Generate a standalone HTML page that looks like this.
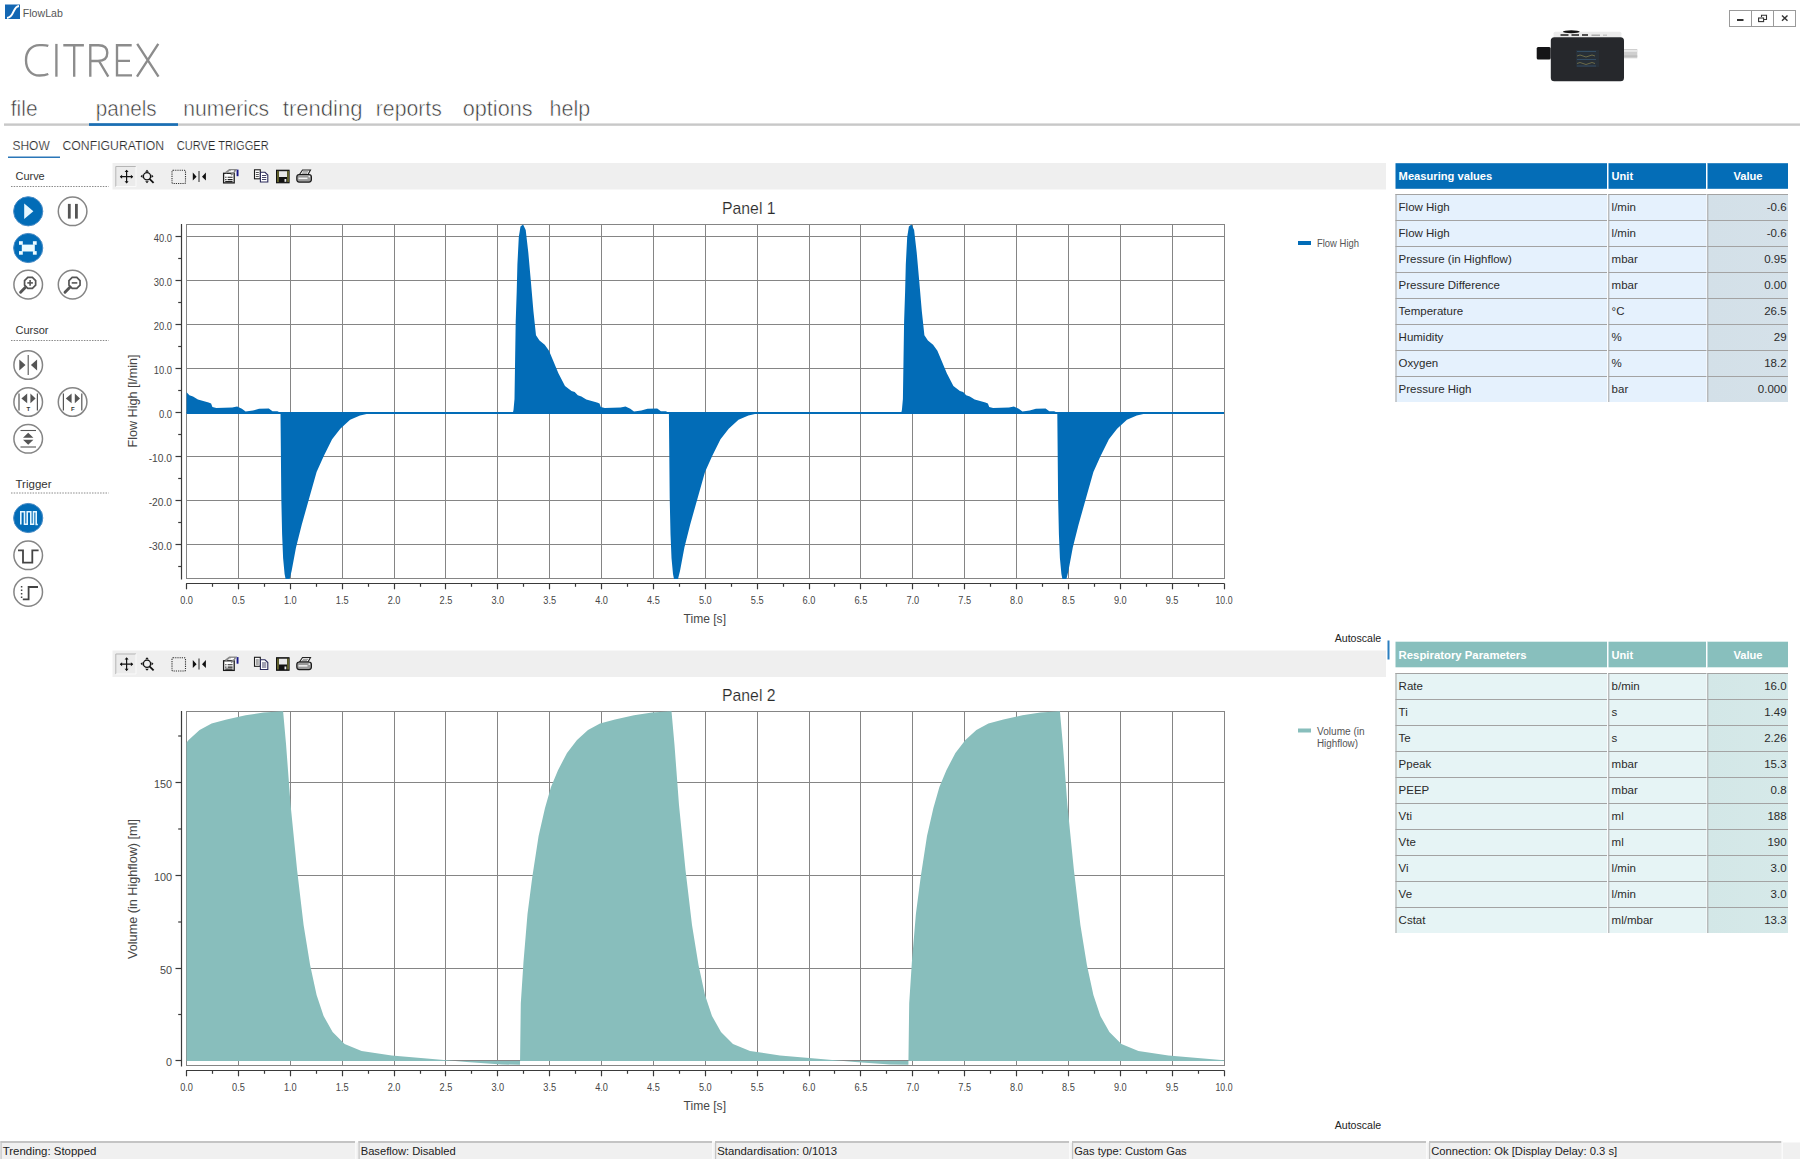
<!DOCTYPE html>
<html><head><meta charset="utf-8"><title>FlowLab</title>
<style>
html,body{margin:0;padding:0;background:#fff;width:1800px;height:1159px;overflow:hidden}
svg{position:absolute;left:0;top:0;display:block}
text{font-family:"Liberation Sans", sans-serif}
</style></head><body>
<svg width="1800" height="1159" viewBox="0 0 1800 1159">
<rect x="5" y="4.5" width="15" height="14.5" fill="#1467b3"/>
<path d="M19 6 C12.5 6.5 14.5 17.5 7 18" stroke="#fff" stroke-width="2" fill="none"/>
<text x="22.8" y="17.3" font-size="11" fill="#555" textLength="40" lengthAdjust="spacingAndGlyphs">FlowLab</text>
<rect x="1729.5" y="10.5" width="66" height="16" fill="#fff" stroke="#9a9a9a" stroke-width="1"/>
<line x1="1751.5" y1="10.5" x2="1751.5" y2="26.5" stroke="#9a9a9a" stroke-width="1"/>
<line x1="1773.5" y1="10.5" x2="1773.5" y2="26.5" stroke="#9a9a9a" stroke-width="1"/>
<rect x="1737" y="19" width="6.5" height="2" fill="#333"/>
<path d="M1761.5 17 V15.2 H1766.5 V19.5 H1764" stroke="#333" stroke-width="1.1" fill="none"/>
<rect x="1758.6" y="18" width="5" height="3.6" stroke="#333" stroke-width="1.1" fill="none"/>
<path d="M1782 15.5 L1787.5 20.8 M1787.5 15.5 L1782 20.8" stroke="#333" stroke-width="1.4"/>
<g stroke="#8c8c8c" stroke-width="2.35" fill="none">
<path d="M48.3 45.9 C45.5 44.7 42.5 45.1 39.5 45.1 C31 45.1 26 51.5 26 60.2 C26 69 31 75.5 39.5 75.5 C42.5 75.5 45.5 75.3 48.3 74"/>
<path d="M56.4 43.9 V76.7"/>
<path d="M63.3 45.2 H83.9 M74.2 45.2 V76.7"/>
<path d="M90.3 76.7 V45.2 H98.5 C104.5 45.2 107.3 48.2 107.3 52.8 C107.3 58 103.8 61 98 61 H90.3 M99 61 L108.3 76.7"/>
<path d="M131.7 45.2 H117 V75.3 H132 M117 60.8 H130"/>
<path d="M137.2 43.9 L158.5 76.7 M158.3 43.9 L137 76.7"/>
</g>
<g>
<rect x="1553.6" y="31.8" width="67.8" height="6" rx="1.5" fill="#ececec"/>
<ellipse cx="1571.3" cy="31.8" rx="8.4" ry="1.5" fill="#111"/>
<rect x="1560.5" y="34.2" width="8" height="1.6" fill="#2a2a2a"/><rect x="1571.5" y="34.2" width="7.5" height="1.6" fill="#2a2a2a"/><rect x="1582" y="34.2" width="6" height="1.6" fill="#2a2a2a"/><rect x="1591.5" y="34.6" width="8.5" height="1.2" fill="#9a9a9a"/><rect x="1603" y="34.6" width="4" height="1.2" fill="#bbb"/>
<rect x="1536.7" y="47" width="14" height="12.5" rx="1.5" fill="#151517"/>
<rect x="1623" y="49" width="14.3" height="9.3" fill="#cfcfcf"/>
<rect x="1623" y="50" width="14.3" height="1.8" fill="#eaeaea"/><rect x="1623" y="55.5" width="14.3" height="1.2" fill="#b8b8b8"/>
<rect x="1550.8" y="37.2" width="73.2" height="44" rx="3.5" fill="#26282c"/>
<rect x="1576" y="50" width="23" height="17" fill="#283038" opacity="0.9"/>
<path d="M1577 56 q3 -2 6 0 t6 0 t6 0 M1577 63.5 q3 -2 6 0 t6 0 t6 0" stroke="#8a8450" stroke-width="0.7" fill="none"/>
<path d="M1577 51.5 h19 M1577 59.5 h19 M1577 66 h19" stroke="#3a5a78" stroke-width="0.7" fill="none"/>
</g>
<text x="10.8" y="115.8" font-size="22" fill="#383838" textLength="26.7" lengthAdjust="spacingAndGlyphs" stroke="#fff" stroke-width="0.55">file</text>
<text x="95.8" y="115.8" font-size="22" fill="#383838" textLength="60.9" lengthAdjust="spacingAndGlyphs" stroke="#fff" stroke-width="0.55">panels</text>
<text x="183.3" y="115.8" font-size="22" fill="#383838" textLength="85.9" lengthAdjust="spacingAndGlyphs" stroke="#fff" stroke-width="0.55">numerics</text>
<text x="282.8" y="115.8" font-size="22" fill="#383838" textLength="79.8" lengthAdjust="spacingAndGlyphs" stroke="#fff" stroke-width="0.55">trending</text>
<text x="375.8" y="115.8" font-size="22" fill="#383838" textLength="66.1" lengthAdjust="spacingAndGlyphs" stroke="#fff" stroke-width="0.55">reports</text>
<text x="462.7" y="115.8" font-size="22" fill="#383838" textLength="69.9" lengthAdjust="spacingAndGlyphs" stroke="#fff" stroke-width="0.55">options</text>
<text x="549.6" y="115.8" font-size="22" fill="#383838" textLength="40.6" lengthAdjust="spacingAndGlyphs" stroke="#fff" stroke-width="0.55">help</text>
<rect x="4" y="123.4" width="1796" height="2.4" fill="#c8c8c8"/>
<rect x="89" y="123.2" width="89" height="2.7" fill="#1a6fb5"/>
<text x="12.5" y="150" font-size="12.5" fill="#2a2a2a" textLength="37.2" lengthAdjust="spacingAndGlyphs" stroke="#fff" stroke-width="0.18">SHOW</text>
<text x="62.5" y="150" font-size="12.5" fill="#2a2a2a" textLength="101.7" lengthAdjust="spacingAndGlyphs" stroke="#fff" stroke-width="0.18">CONFIGURATION</text>
<text x="176.7" y="150" font-size="12.5" fill="#2a2a2a" textLength="92" lengthAdjust="spacingAndGlyphs" stroke="#fff" stroke-width="0.18">CURVE TRIGGER</text>
<rect x="8" y="156.5" width="52" height="1.5" fill="#2a76b8"/>
<text x="15.5" y="180" font-size="11" fill="#333" textLength="29.2" lengthAdjust="spacingAndGlyphs">Curve</text>
<line x1="11" y1="186.5" x2="108.7" y2="186.5" stroke="#8a8a8a" stroke-width="1" stroke-dasharray="1.5 1.2"/>
<text x="15.5" y="334" font-size="11" fill="#333" textLength="33" lengthAdjust="spacingAndGlyphs">Cursor</text>
<line x1="11" y1="340.5" x2="108.7" y2="340.5" stroke="#8a8a8a" stroke-width="1" stroke-dasharray="1.5 1.2"/>
<text x="15.5" y="487.6" font-size="11" fill="#333" textLength="36" lengthAdjust="spacingAndGlyphs">Trigger</text>
<line x1="11" y1="493" x2="108.7" y2="493" stroke="#8a8a8a" stroke-width="1" stroke-dasharray="1.5 1.2"/>
<circle cx="28.2" cy="211.3" r="14.6" fill="#026cb7" stroke="#4a8cc6" stroke-width="1"/>
<path d="M24.2 203.4 L33.4 211.3 L24.2 219.1 Z" fill="#e6f7ff"/>
<circle cx="72.6" cy="211.3" r="14.3" fill="#fff" stroke="#858585" stroke-width="1.5"/>
<rect x="67.9" y="203.9" width="2.8" height="14.7" fill="#555"/><rect x="75" y="203.9" width="2.8" height="14.7" fill="#555"/>
<circle cx="28.2" cy="248" r="14.6" fill="#026cb7" stroke="#4a8cc6" stroke-width="1"/>
<g fill="#ecfbff"><rect x="21.8" y="244.6" width="13" height="6.9"/><rect x="19" y="241.2" width="3.8" height="3.6"/><rect x="32.9" y="241.2" width="3.8" height="3.6"/><rect x="19" y="251.1" width="3.8" height="3.6"/><rect x="32.9" y="251.1" width="3.8" height="3.6"/></g>
<circle cx="28.2" cy="284.6" r="14.3" fill="#fff" stroke="#858585" stroke-width="1.5"/>
<polygon points="35.64,285.20 32.40,288.44 27.80,288.44 24.56,285.20 24.56,280.60 27.80,277.36 32.40,277.36 35.64,280.60" fill="#fff" stroke="#555" stroke-width="1.7"/>
<line x1="25.5" y1="287.3" x2="20.6" y2="292.20000000000005" stroke="#555" stroke-width="2.9" stroke-linecap="round"/>
<line x1="27.299999999999997" y1="282.90000000000003" x2="32.9" y2="282.90000000000003" stroke="#555" stroke-width="1.6"/>
<line x1="30.099999999999998" y1="280.1" x2="30.099999999999998" y2="285.70000000000005" stroke="#555" stroke-width="1.6"/>
<circle cx="72.6" cy="284.6" r="14.3" fill="#fff" stroke="#858585" stroke-width="1.5"/>
<polygon points="80.04,285.20 76.80,288.44 72.20,288.44 68.96,285.20 68.96,280.60 72.20,277.36 76.80,277.36 80.04,280.60" fill="#fff" stroke="#555" stroke-width="1.7"/>
<line x1="69.9" y1="287.3" x2="65.0" y2="292.20000000000005" stroke="#555" stroke-width="2.9" stroke-linecap="round"/>
<line x1="71.7" y1="282.90000000000003" x2="77.3" y2="282.90000000000003" stroke="#555" stroke-width="1.6"/>
<circle cx="28.2" cy="365" r="14.3" fill="#fff" stroke="#858585" stroke-width="1.5"/>
<line x1="28.2" y1="355" x2="28.2" y2="375" stroke="#555" stroke-width="1.1"/>
<path d="M19.3 359.5 L25.5 365 L19.3 370.5 Z M37.1 359.5 L30.9 365 L37.1 370.5 Z" fill="#555"/>
<circle cx="28.2" cy="402" r="14.3" fill="#fff" stroke="#858585" stroke-width="1.5"/>
<line x1="19.0" y1="393.5" x2="19.0" y2="410.5" stroke="#555" stroke-width="1.2"/>
<line x1="37.4" y1="393.5" x2="37.4" y2="410.5" stroke="#555" stroke-width="1.2"/>
<path d="M27.2 393.5 L21.4 398.4 L27.2 403.3 Z M30.4 393.5 L35.6 398.4 L30.4 403.3 Z" fill="#555"/>
<text x="28.4" y="410.6" font-size="6" fill="#333" text-anchor="middle" font-weight="bold">T</text>
<circle cx="72.6" cy="402" r="14.3" fill="#fff" stroke="#858585" stroke-width="1.5"/>
<line x1="63.39999999999999" y1="393.5" x2="63.39999999999999" y2="410.5" stroke="#555" stroke-width="1.2"/>
<line x1="81.8" y1="393.5" x2="81.8" y2="410.5" stroke="#555" stroke-width="1.2"/>
<path d="M71.6 393.5 L65.8 398.4 L71.6 403.3 Z M74.8 393.5 L80.0 398.4 L74.8 403.3 Z" fill="#555"/>
<text x="72.8" y="410.6" font-size="6" fill="#333" text-anchor="middle" font-weight="bold">F</text>
<circle cx="28.2" cy="438.8" r="14.3" fill="#fff" stroke="#858585" stroke-width="1.5"/>
<line x1="20.5" y1="430.5" x2="36" y2="430.5" stroke="#555" stroke-width="1.1"/><line x1="20.5" y1="447" x2="36" y2="447" stroke="#555" stroke-width="1.1"/>
<path d="M23 437.8 L28.2 432.8 L33.4 437.8 Z M23 439.8 L28.2 444.8 L33.4 439.8 Z" fill="#555"/>
<circle cx="28.2" cy="518" r="14.6" fill="#026cb7" stroke="#4a8cc6" stroke-width="1"/>
<path d="M20.8 524.5 V511.8 H24.5 V524.3 H27.2 V511.8 H30.8 V524.3 H33.5 V511.8 H36.2 V524.5 H37.8" stroke="#e6f7ff" stroke-width="1.6" fill="none"/>
<circle cx="28.2" cy="555.3" r="14.3" fill="#fff" stroke="#858585" stroke-width="1.5"/>
<path d="M18 550.4 H23 V562.6 H32.3 V550.4 H38.6" stroke="#444" stroke-width="1.8" fill="none"/>
<circle cx="28.2" cy="591.9" r="14.3" fill="#fff" stroke="#858585" stroke-width="1.5"/>
<path d="M22.8 599.3 H28.6 V587 H38" stroke="#444" stroke-width="1.8" fill="none"/>
<path d="M21.6 586 V598" stroke="#444" stroke-width="1.5" stroke-dasharray="1.5 2" fill="none"/>
<rect x="112.5" y="163" width="1273.5" height="26.5" fill="#efefef"/>
<rect x="115.5" y="166.3" width="20.5" height="20.5" fill="#ebebeb"/>
<path d="M115.8 186.5 V166.5 H136" stroke="#b5b5b5" stroke-width="1" fill="none"/>
<path d="M116 186.5 H136 V166.5" stroke="#fafafa" stroke-width="1" fill="none"/>
<path d="M120.5 176.7 H132.5 M126.6 170.39999999999998 V183.0" stroke="#111" stroke-width="1.2"/>
<path d="M119.8 176.7 l2.3 -2 v4 z M133.2 176.7 l-2.3 -2 v4 z M126.6 169.79999999999998 l-2 2.3 h4 z M126.6 183.6 l-2 -2.3 h4 z" fill="#111"/>
<circle cx="147" cy="176.2" r="3.6" fill="none" stroke="#111" stroke-width="1.3"/>
<line x1="149.5" y1="178.89999999999998" x2="153.6" y2="182.89999999999998" stroke="#111" stroke-width="1.8"/>
<path d="M147 169.7 l-1.8 2 h3.6 z M147 183.29999999999998 l-1.8 -2 h3.6 z M140.5 176.2 l2 -1.8 v3.6 z M153.5 176.2 l-2 -1.8 v3.6 z" fill="#111"/>
<rect x="172" y="170.3" width="13.5" height="13.2" rx="1" fill="none" stroke="#333" stroke-width="1.1" stroke-dasharray="1.2 1"/>
<line x1="199" y1="171" x2="199" y2="182" stroke="#555" stroke-width="1.3"/>
<path d="M192.8 172.5 L196.6 176.7 L192.8 180.5 Z M205.9 172.5 L202 176.7 L205.9 180.5 Z" fill="#111"/>
<rect x="223.6" y="173.3" width="10.6" height="9.6" fill="#fff" stroke="#1a1a1a" stroke-width="1.3"/>
<path d="M225.2 177.2 h1.3 M227.6 177.2 h5 M225.2 179.6 h1.3 M227.6 179.6 h5 M225.2 181.6 h7.4" stroke="#222" stroke-width="1.1"/>
<path d="M225.5 173 L229.5 169.8 H235.5 L233.8 172.5 L231 175" stroke="#8a8a8a" stroke-width="1.8" fill="none"/>
<path d="M231 171 L234 171" stroke="#fff" stroke-width="1.2"/>
<rect x="236.6" y="169.6" width="1.9" height="6.6" fill="#1a1a8a"/>
<rect x="254.5" y="169.8" width="5.8" height="9" fill="#fff" stroke="#1a1a1a" stroke-width="1.1"/>
<path d="M255.8 172.5 h3 M255.8 174.5 h3 M255.8 176.5 h3" stroke="#444" stroke-width="0.9"/>
<path d="M260.4 172.3 H265 L267.8 175 V182 H260.4 Z" fill="#fff" stroke="#2a2a5a" stroke-width="1.1"/>
<path d="M262 175.5 h4.3 M262 177.5 h4.3 M262 179.5 h4.3" stroke="#444466" stroke-width="1"/>
<rect x="276.5" y="170.2" width="12.6" height="12.6" fill="#111" stroke="#111" stroke-width="1"/>
<rect x="277.2" y="171" width="1.5" height="11" fill="#777733"/><rect x="287.3" y="171" width="1.5" height="11" fill="#777733"/>
<rect x="279" y="171.2" width="8" height="5.8" fill="#e8e8e8"/>
<rect x="284.5" y="179" width="1.8" height="2.8" fill="#eee"/>
<path d="M299.5 174.5 L302.5 170 H310.5 L308 174.5 Z" fill="#f0f0f0" stroke="#222" stroke-width="1.1"/>
<path d="M303 171.8 h5 M302 173.2 h5" stroke="#666" stroke-width="0.7"/>
<rect x="296.8" y="174.5" width="14.6" height="7.6" rx="2.5" fill="#9a9a9a" stroke="#1a1a1a" stroke-width="1.2"/>
<rect x="298.5" y="177.6" width="9" height="1.5" fill="#f4f4f4"/>
<circle cx="309.3" cy="176.6" r="0.9" fill="#eee"/>
<rect x="112.5" y="650.5" width="1273.5" height="26.5" fill="#efefef"/>
<rect x="115.5" y="653.8" width="20.5" height="20.5" fill="#ebebeb"/>
<path d="M115.8 674.0 V654.0 H136" stroke="#b5b5b5" stroke-width="1" fill="none"/>
<path d="M116 674.0 H136 V654.0" stroke="#fafafa" stroke-width="1" fill="none"/>
<path d="M120.5 664.2 H132.5 M126.6 657.9000000000001 V670.5" stroke="#111" stroke-width="1.2"/>
<path d="M119.8 664.2 l2.3 -2 v4 z M133.2 664.2 l-2.3 -2 v4 z M126.6 657.3000000000001 l-2 2.3 h4 z M126.6 671.1 l-2 -2.3 h4 z" fill="#111"/>
<circle cx="147" cy="663.7" r="3.6" fill="none" stroke="#111" stroke-width="1.3"/>
<line x1="149.5" y1="666.4000000000001" x2="153.6" y2="670.4000000000001" stroke="#111" stroke-width="1.8"/>
<path d="M147 657.2 l-1.8 2 h3.6 z M147 670.8000000000001 l-1.8 -2 h3.6 z M140.5 663.7 l2 -1.8 v3.6 z M153.5 663.7 l-2 -1.8 v3.6 z" fill="#111"/>
<rect x="172" y="657.8" width="13.5" height="13.2" rx="1" fill="none" stroke="#333" stroke-width="1.1" stroke-dasharray="1.2 1"/>
<line x1="199" y1="658.5" x2="199" y2="669.5" stroke="#555" stroke-width="1.3"/>
<path d="M192.8 660.0 L196.6 664.2 L192.8 668.0 Z M205.9 660.0 L202 664.2 L205.9 668.0 Z" fill="#111"/>
<rect x="223.6" y="660.8" width="10.6" height="9.6" fill="#fff" stroke="#1a1a1a" stroke-width="1.3"/>
<path d="M225.2 664.7 h1.3 M227.6 664.7 h5 M225.2 667.1 h1.3 M227.6 667.1 h5 M225.2 669.1 h7.4" stroke="#222" stroke-width="1.1"/>
<path d="M225.5 660.5 L229.5 657.3 H235.5 L233.8 660.0 L231 662.5" stroke="#8a8a8a" stroke-width="1.8" fill="none"/>
<path d="M231 658.5 L234 658.5" stroke="#fff" stroke-width="1.2"/>
<rect x="236.6" y="657.1" width="1.9" height="6.6" fill="#1a1a8a"/>
<rect x="254.5" y="657.3" width="5.8" height="9" fill="#fff" stroke="#1a1a1a" stroke-width="1.1"/>
<path d="M255.8 660.0 h3 M255.8 662.0 h3 M255.8 664.0 h3" stroke="#444" stroke-width="0.9"/>
<path d="M260.4 659.8 H265 L267.8 662.5 V669.5 H260.4 Z" fill="#fff" stroke="#2a2a5a" stroke-width="1.1"/>
<path d="M262 663.0 h4.3 M262 665.0 h4.3 M262 667.0 h4.3" stroke="#444466" stroke-width="1"/>
<rect x="276.5" y="657.7" width="12.6" height="12.6" fill="#111" stroke="#111" stroke-width="1"/>
<rect x="277.2" y="658.5" width="1.5" height="11" fill="#777733"/><rect x="287.3" y="658.5" width="1.5" height="11" fill="#777733"/>
<rect x="279" y="658.7" width="8" height="5.8" fill="#e8e8e8"/>
<rect x="284.5" y="666.5" width="1.8" height="2.8" fill="#eee"/>
<path d="M299.5 662.0 L302.5 657.5 H310.5 L308 662.0 Z" fill="#f0f0f0" stroke="#222" stroke-width="1.1"/>
<path d="M303 659.3 h5 M302 660.7 h5" stroke="#666" stroke-width="0.7"/>
<rect x="296.8" y="662.0" width="14.6" height="7.6" rx="2.5" fill="#9a9a9a" stroke="#1a1a1a" stroke-width="1.2"/>
<rect x="298.5" y="665.1" width="9" height="1.5" fill="#f4f4f4"/>
<circle cx="309.3" cy="664.1" r="0.9" fill="#eee"/>
<text x="748.8" y="213.7" font-size="16.5" fill="#2a2a2a" text-anchor="middle" textLength="53.7" lengthAdjust="spacingAndGlyphs" stroke="#fff" stroke-width="0.18">Panel 1</text>
<g stroke="#858585" stroke-width="1">
<line x1="238.5" y1="224.5" x2="238.5" y2="578.5"/>
<line x1="290.5" y1="224.5" x2="290.5" y2="578.5"/>
<line x1="342.5" y1="224.5" x2="342.5" y2="578.5"/>
<line x1="394.5" y1="224.5" x2="394.5" y2="578.5"/>
<line x1="445.5" y1="224.5" x2="445.5" y2="578.5"/>
<line x1="497.5" y1="224.5" x2="497.5" y2="578.5"/>
<line x1="549.5" y1="224.5" x2="549.5" y2="578.5"/>
<line x1="601.5" y1="224.5" x2="601.5" y2="578.5"/>
<line x1="653.5" y1="224.5" x2="653.5" y2="578.5"/>
<line x1="705.5" y1="224.5" x2="705.5" y2="578.5"/>
<line x1="757.5" y1="224.5" x2="757.5" y2="578.5"/>
<line x1="809.5" y1="224.5" x2="809.5" y2="578.5"/>
<line x1="860.5" y1="224.5" x2="860.5" y2="578.5"/>
<line x1="912.5" y1="224.5" x2="912.5" y2="578.5"/>
<line x1="964.5" y1="224.5" x2="964.5" y2="578.5"/>
<line x1="1016.5" y1="224.5" x2="1016.5" y2="578.5"/>
<line x1="1068.5" y1="224.5" x2="1068.5" y2="578.5"/>
<line x1="1120.5" y1="224.5" x2="1120.5" y2="578.5"/>
<line x1="1172.5" y1="224.5" x2="1172.5" y2="578.5"/>
<line x1="186.5" y1="236.5" x2="1224.5" y2="236.5"/>
<line x1="186.5" y1="280.5" x2="1224.5" y2="280.5"/>
<line x1="186.5" y1="324.5" x2="1224.5" y2="324.5"/>
<line x1="186.5" y1="368.5" x2="1224.5" y2="368.5"/>
<line x1="186.5" y1="412.5" x2="1224.5" y2="412.5"/>
<line x1="186.5" y1="456.5" x2="1224.5" y2="456.5"/>
<line x1="186.5" y1="500.5" x2="1224.5" y2="500.5"/>
<line x1="186.5" y1="544.5" x2="1224.5" y2="544.5"/>
<rect x="186.5" y="224.5" width="1038.0" height="354.0" fill="none"/>
</g>
<path d="M186.6 413 L186.6 392.3 L189.4 395.3 L193.0 396.5 L197.9 399.6 L208.6 402.5 L211.1 403.5 L212.4 406.9 L216.3 408.1 L232.2 407.5 L237.1 406.6 L241.9 408.7 L245.6 411.5 L252.9 410.6 L259.1 408.7 L268.8 408.4 L272.5 411.3 L277.4 411.2 L280.0 412.5 L280.5 413.0 L281.3 498.0 L282.1 534.0 L283.1 558.0 L284.6 574.0 L285.6 579.0 L289.6 579.0 L291.6 571.0 L296.0 547.5 L301.8 524.6 L309.1 498.4 L316.6 472.0 L323.9 455.7 L332.1 439.3 L340.3 428.7 L350.1 419.7 L360.0 415.6 L366.6 414.0 L371.6 413.0 L512.4 413.0 L512.8 413.0 L513.5 410.0 L514.5 399.0 L515.7 321.4 L516.7 292.0 L517.4 264.6 L518.8 237.0 L520.5 226.6 L523.1 224.6 L525.7 230.0 L528.3 252.5 L530.9 281.8 L533.4 311.0 L536.0 335.2 L539.5 340.4 L544.7 344.7 L549.0 350.8 L553.3 361.0 L558.4 373.2 L565.0 386.0 L571.5 391.0 L574.7 392.0 L577.8 395.3 L581.4 396.5 L586.3 399.6 L597.0 402.5 L599.5 403.5 L600.8 406.9 L604.7 408.1 L620.6 407.5 L625.5 406.6 L630.3 408.7 L634.0 411.5 L641.3 410.6 L647.5 408.7 L657.2 408.4 L660.9 411.3 L665.8 411.2 L668.4 412.5 L668.9 413.0 L669.7 498.0 L670.5 534.0 L671.5 558.0 L673.0 574.0 L674.0 579.0 L678.0 579.0 L680.0 571.0 L684.4 547.5 L690.2 524.6 L697.5 498.4 L705.0 472.0 L712.3 455.7 L720.5 439.3 L728.7 428.7 L738.5 419.7 L748.4 415.6 L755.0 414.0 L760.0 413.0 L900.8 413.0 L901.2 413.0 L901.9 410.0 L902.9 399.0 L904.1 321.4 L905.1 292.0 L905.8 264.6 L907.2 237.0 L908.9 226.6 L911.5 224.6 L914.1 230.0 L916.7 252.5 L919.3 281.8 L921.8 311.0 L924.4 335.2 L927.9 340.4 L933.1 344.7 L937.4 350.8 L941.7 361.0 L946.8 373.2 L953.4 386.0 L959.9 391.0 L963.1 392.0 L966.2 395.3 L969.8 396.5 L974.7 399.6 L985.4 402.5 L987.9 403.5 L989.2 406.9 L993.1 408.1 L1009.0 407.5 L1013.9 406.6 L1018.7 408.7 L1022.4 411.5 L1029.7 410.6 L1035.9 408.7 L1045.6 408.4 L1049.3 411.3 L1054.2 411.2 L1056.8 412.5 L1057.3 413.0 L1058.1 498.0 L1058.9 534.0 L1059.9 558.0 L1061.4 574.0 L1062.4 579.0 L1066.4 579.0 L1068.4 571.0 L1072.8 547.5 L1078.6 524.6 L1085.9 498.4 L1093.4 472.0 L1100.7 455.7 L1108.9 439.3 L1117.1 428.7 L1126.9 419.7 L1136.8 415.6 L1143.4 414.0 L1148.4 413.0 L1224.0 413.0 L1224.0 413 Z" fill="#026cb7"/>
<rect x="186.6" y="412" width="1037.4" height="2" fill="#026cb7"/>
<g stroke="#3a3a3a" stroke-width="1.2">
<line x1="181.5" y1="224.0" x2="181.5" y2="579.5"/>
<line x1="175.5" y1="236.5" x2="181.5" y2="236.5"/>
<line x1="175.5" y1="280.5" x2="181.5" y2="280.5"/>
<line x1="175.5" y1="324.5" x2="181.5" y2="324.5"/>
<line x1="175.5" y1="368.5" x2="181.5" y2="368.5"/>
<line x1="175.5" y1="412.5" x2="181.5" y2="412.5"/>
<line x1="175.5" y1="456.5" x2="181.5" y2="456.5"/>
<line x1="175.5" y1="500.5" x2="181.5" y2="500.5"/>
<line x1="175.5" y1="544.5" x2="181.5" y2="544.5"/>
<line x1="178.2" y1="258.5" x2="181.5" y2="258.5"/>
<line x1="178.2" y1="302.5" x2="181.5" y2="302.5"/>
<line x1="178.2" y1="346.5" x2="181.5" y2="346.5"/>
<line x1="178.2" y1="390.5" x2="181.5" y2="390.5"/>
<line x1="178.2" y1="434.5" x2="181.5" y2="434.5"/>
<line x1="178.2" y1="478.5" x2="181.5" y2="478.5"/>
<line x1="178.2" y1="522.5" x2="181.5" y2="522.5"/>
<line x1="178.2" y1="566.5" x2="181.5" y2="566.5"/>
<line x1="186.1" y1="583.5" x2="1224.5" y2="583.5"/>
<line x1="186.5" y1="583.5" x2="186.5" y2="589.3"/>
<line x1="238.5" y1="583.5" x2="238.5" y2="589.3"/>
<line x1="290.5" y1="583.5" x2="290.5" y2="589.3"/>
<line x1="342.5" y1="583.5" x2="342.5" y2="589.3"/>
<line x1="394.5" y1="583.5" x2="394.5" y2="589.3"/>
<line x1="445.5" y1="583.5" x2="445.5" y2="589.3"/>
<line x1="497.5" y1="583.5" x2="497.5" y2="589.3"/>
<line x1="549.5" y1="583.5" x2="549.5" y2="589.3"/>
<line x1="601.5" y1="583.5" x2="601.5" y2="589.3"/>
<line x1="653.5" y1="583.5" x2="653.5" y2="589.3"/>
<line x1="705.5" y1="583.5" x2="705.5" y2="589.3"/>
<line x1="757.5" y1="583.5" x2="757.5" y2="589.3"/>
<line x1="809.5" y1="583.5" x2="809.5" y2="589.3"/>
<line x1="860.5" y1="583.5" x2="860.5" y2="589.3"/>
<line x1="912.5" y1="583.5" x2="912.5" y2="589.3"/>
<line x1="964.5" y1="583.5" x2="964.5" y2="589.3"/>
<line x1="1016.5" y1="583.5" x2="1016.5" y2="589.3"/>
<line x1="1068.5" y1="583.5" x2="1068.5" y2="589.3"/>
<line x1="1120.5" y1="583.5" x2="1120.5" y2="589.3"/>
<line x1="1172.5" y1="583.5" x2="1172.5" y2="589.3"/>
<line x1="1224.5" y1="583.5" x2="1224.5" y2="589.3"/>
<line x1="212.5" y1="583.5" x2="212.5" y2="586.8"/>
<line x1="264.5" y1="583.5" x2="264.5" y2="586.8"/>
<line x1="316.5" y1="583.5" x2="316.5" y2="586.8"/>
<line x1="368.5" y1="583.5" x2="368.5" y2="586.8"/>
<line x1="420.5" y1="583.5" x2="420.5" y2="586.8"/>
<line x1="471.5" y1="583.5" x2="471.5" y2="586.8"/>
<line x1="523.5" y1="583.5" x2="523.5" y2="586.8"/>
<line x1="575.5" y1="583.5" x2="575.5" y2="586.8"/>
<line x1="627.5" y1="583.5" x2="627.5" y2="586.8"/>
<line x1="679.5" y1="583.5" x2="679.5" y2="586.8"/>
<line x1="731.5" y1="583.5" x2="731.5" y2="586.8"/>
<line x1="783.5" y1="583.5" x2="783.5" y2="586.8"/>
<line x1="834.5" y1="583.5" x2="834.5" y2="586.8"/>
<line x1="886.5" y1="583.5" x2="886.5" y2="586.8"/>
<line x1="938.5" y1="583.5" x2="938.5" y2="586.8"/>
<line x1="990.5" y1="583.5" x2="990.5" y2="586.8"/>
<line x1="1042.5" y1="583.5" x2="1042.5" y2="586.8"/>
<line x1="1094.5" y1="583.5" x2="1094.5" y2="586.8"/>
<line x1="1146.5" y1="583.5" x2="1146.5" y2="586.8"/>
<line x1="1198.5" y1="583.5" x2="1198.5" y2="586.8"/>
</g>
<text x="172" y="241.5" font-size="10" fill="#474747" text-anchor="end" textLength="18.2" lengthAdjust="spacingAndGlyphs">40.0</text>
<text x="172" y="285.5" font-size="10" fill="#474747" text-anchor="end" textLength="18.2" lengthAdjust="spacingAndGlyphs">30.0</text>
<text x="172" y="329.5" font-size="10" fill="#474747" text-anchor="end" textLength="18.2" lengthAdjust="spacingAndGlyphs">20.0</text>
<text x="172" y="373.5" font-size="10" fill="#474747" text-anchor="end" textLength="18.2" lengthAdjust="spacingAndGlyphs">10.0</text>
<text x="172" y="417.5" font-size="10" fill="#474747" text-anchor="end" textLength="13.099999999999998" lengthAdjust="spacingAndGlyphs">0.0</text>
<text x="172" y="461.5" font-size="10" fill="#474747" text-anchor="end" textLength="23.3" lengthAdjust="spacingAndGlyphs">-10.0</text>
<text x="172" y="505.5" font-size="10" fill="#474747" text-anchor="end" textLength="23.3" lengthAdjust="spacingAndGlyphs">-20.0</text>
<text x="172" y="549.5" font-size="10" fill="#474747" text-anchor="end" textLength="23.3" lengthAdjust="spacingAndGlyphs">-30.0</text>
<text x="186.6" y="603.7" font-size="10" fill="#474747" text-anchor="middle" textLength="12.8" lengthAdjust="spacingAndGlyphs">0.0</text>
<text x="238.5" y="603.7" font-size="10" fill="#474747" text-anchor="middle" textLength="12.8" lengthAdjust="spacingAndGlyphs">0.5</text>
<text x="290.3" y="603.7" font-size="10" fill="#474747" text-anchor="middle" textLength="12.8" lengthAdjust="spacingAndGlyphs">1.0</text>
<text x="342.2" y="603.7" font-size="10" fill="#474747" text-anchor="middle" textLength="12.8" lengthAdjust="spacingAndGlyphs">1.5</text>
<text x="394.1" y="603.7" font-size="10" fill="#474747" text-anchor="middle" textLength="12.8" lengthAdjust="spacingAndGlyphs">2.0</text>
<text x="446.0" y="603.7" font-size="10" fill="#474747" text-anchor="middle" textLength="12.8" lengthAdjust="spacingAndGlyphs">2.5</text>
<text x="497.8" y="603.7" font-size="10" fill="#474747" text-anchor="middle" textLength="12.8" lengthAdjust="spacingAndGlyphs">3.0</text>
<text x="549.7" y="603.7" font-size="10" fill="#474747" text-anchor="middle" textLength="12.8" lengthAdjust="spacingAndGlyphs">3.5</text>
<text x="601.6" y="603.7" font-size="10" fill="#474747" text-anchor="middle" textLength="12.8" lengthAdjust="spacingAndGlyphs">4.0</text>
<text x="653.4" y="603.7" font-size="10" fill="#474747" text-anchor="middle" textLength="12.8" lengthAdjust="spacingAndGlyphs">4.5</text>
<text x="705.3" y="603.7" font-size="10" fill="#474747" text-anchor="middle" textLength="12.8" lengthAdjust="spacingAndGlyphs">5.0</text>
<text x="757.2" y="603.7" font-size="10" fill="#474747" text-anchor="middle" textLength="12.8" lengthAdjust="spacingAndGlyphs">5.5</text>
<text x="809.0" y="603.7" font-size="10" fill="#474747" text-anchor="middle" textLength="12.8" lengthAdjust="spacingAndGlyphs">6.0</text>
<text x="860.9" y="603.7" font-size="10" fill="#474747" text-anchor="middle" textLength="12.8" lengthAdjust="spacingAndGlyphs">6.5</text>
<text x="912.8" y="603.7" font-size="10" fill="#474747" text-anchor="middle" textLength="12.8" lengthAdjust="spacingAndGlyphs">7.0</text>
<text x="964.7" y="603.7" font-size="10" fill="#474747" text-anchor="middle" textLength="12.8" lengthAdjust="spacingAndGlyphs">7.5</text>
<text x="1016.5" y="603.7" font-size="10" fill="#474747" text-anchor="middle" textLength="12.8" lengthAdjust="spacingAndGlyphs">8.0</text>
<text x="1068.4" y="603.7" font-size="10" fill="#474747" text-anchor="middle" textLength="12.8" lengthAdjust="spacingAndGlyphs">8.5</text>
<text x="1120.3" y="603.7" font-size="10" fill="#474747" text-anchor="middle" textLength="12.8" lengthAdjust="spacingAndGlyphs">9.0</text>
<text x="1172.1" y="603.7" font-size="10" fill="#474747" text-anchor="middle" textLength="12.8" lengthAdjust="spacingAndGlyphs">9.5</text>
<text x="1224.0" y="603.7" font-size="10" fill="#474747" text-anchor="middle" textLength="17" lengthAdjust="spacingAndGlyphs">10.0</text>
<text x="704.8" y="622.8" font-size="12" fill="#474747" text-anchor="middle" textLength="42.4" lengthAdjust="spacingAndGlyphs">Time [s]</text>
<text x="0" y="0" font-size="12.5" fill="#474747" text-anchor="middle" transform="translate(136.5 401) rotate(-90)" textLength="93" lengthAdjust="spacingAndGlyphs">Flow High [l/min]</text>
<text x="1334.7" y="641.5" font-size="10.5" fill="#222" textLength="46.5" lengthAdjust="spacingAndGlyphs">Autoscale</text>
<rect x="1298" y="241" width="13" height="4" fill="#026cb7"/>
<text x="1317" y="247" font-size="10.5" fill="#555" textLength="42" lengthAdjust="spacingAndGlyphs">Flow High</text>
<text x="748.8" y="700.7" font-size="16.5" fill="#2a2a2a" text-anchor="middle" textLength="53.7" lengthAdjust="spacingAndGlyphs" stroke="#fff" stroke-width="0.18">Panel 2</text>
<g stroke="#858585" stroke-width="1">
<line x1="238.5" y1="711.5" x2="238.5" y2="1065.5"/>
<line x1="290.5" y1="711.5" x2="290.5" y2="1065.5"/>
<line x1="342.5" y1="711.5" x2="342.5" y2="1065.5"/>
<line x1="394.5" y1="711.5" x2="394.5" y2="1065.5"/>
<line x1="445.5" y1="711.5" x2="445.5" y2="1065.5"/>
<line x1="497.5" y1="711.5" x2="497.5" y2="1065.5"/>
<line x1="549.5" y1="711.5" x2="549.5" y2="1065.5"/>
<line x1="601.5" y1="711.5" x2="601.5" y2="1065.5"/>
<line x1="653.5" y1="711.5" x2="653.5" y2="1065.5"/>
<line x1="705.5" y1="711.5" x2="705.5" y2="1065.5"/>
<line x1="757.5" y1="711.5" x2="757.5" y2="1065.5"/>
<line x1="809.5" y1="711.5" x2="809.5" y2="1065.5"/>
<line x1="860.5" y1="711.5" x2="860.5" y2="1065.5"/>
<line x1="912.5" y1="711.5" x2="912.5" y2="1065.5"/>
<line x1="964.5" y1="711.5" x2="964.5" y2="1065.5"/>
<line x1="1016.5" y1="711.5" x2="1016.5" y2="1065.5"/>
<line x1="1068.5" y1="711.5" x2="1068.5" y2="1065.5"/>
<line x1="1120.5" y1="711.5" x2="1120.5" y2="1065.5"/>
<line x1="1172.5" y1="711.5" x2="1172.5" y2="1065.5"/>
<line x1="186.5" y1="782.5" x2="1224.5" y2="782.5"/>
<line x1="186.5" y1="875.5" x2="1224.5" y2="875.5"/>
<line x1="186.5" y1="968.5" x2="1224.5" y2="968.5"/>
<line x1="186.5" y1="1060.5" x2="1224.5" y2="1060.5"/>
<rect x="186.5" y="711.5" width="1038.0" height="354.0" fill="none"/>
</g>
<path d="M186.6 1060.9 L186.6 742.6 L188.6 740.0 L199.6 730.0 L211.6 723.5 L226.6 719.5 L245.6 715.3 L263.6 712.5 L283.1 711.3 L286.1 745.0 L290.6 805.0 L297.1 870.0 L303.6 925.0 L310.1 965.0 L316.6 995.0 L323.6 1016.0 L332.6 1032.0 L344.6 1044.0 L361.6 1051.0 L391.6 1055.5 L426.6 1058.5 L466.6 1062.0 L501.6 1064.5 L519.1 1064.8 L520.0 1064.8 L520.8 1003.3 L523.5 961.8 L527.5 914.0 L532.3 877.0 L538.6 836.0 L545.0 808.0 L551.0 787.0 L558.0 770.2 L567.0 753.0 L577.0 740.0 L588.0 730.0 L600.0 723.5 L615.0 719.5 L634.0 715.3 L652.0 712.5 L671.5 711.3 L674.5 745.0 L679.0 805.0 L685.5 870.0 L692.0 925.0 L698.5 965.0 L705.0 995.0 L712.0 1016.0 L721.0 1032.0 L733.0 1044.0 L750.0 1051.0 L780.0 1055.5 L815.0 1058.5 L855.0 1062.0 L890.0 1064.5 L907.5 1064.8 L908.4 1064.8 L909.2 1003.3 L911.9 961.8 L915.9 914.0 L920.7 877.0 L927.0 836.0 L933.4 808.0 L939.4 787.0 L946.4 770.2 L955.4 753.0 L965.4 740.0 L976.4 730.0 L988.4 723.5 L1003.4 719.5 L1022.4 715.3 L1040.4 712.5 L1059.9 711.3 L1062.9 745.0 L1067.4 805.0 L1073.9 870.0 L1080.4 925.0 L1086.9 965.0 L1093.4 995.0 L1100.4 1016.0 L1109.4 1032.0 L1121.4 1044.0 L1138.4 1051.0 L1168.4 1055.5 L1203.4 1058.5 L1224.0 1060.3 L1224.0 1060.9 Z" fill="#88bebc"/>
<g stroke="#3a3a3a" stroke-width="1.2">
<line x1="181.5" y1="711.0" x2="181.5" y2="1066.5"/>
<line x1="175.5" y1="782.5" x2="181.5" y2="782.5"/>
<line x1="175.5" y1="875.5" x2="181.5" y2="875.5"/>
<line x1="175.5" y1="968.5" x2="181.5" y2="968.5"/>
<line x1="175.5" y1="1060.5" x2="181.5" y2="1060.5"/>
<line x1="178.2" y1="736.0" x2="181.5" y2="736.0"/>
<line x1="178.2" y1="829.0" x2="181.5" y2="829.0"/>
<line x1="178.2" y1="922.0" x2="181.5" y2="922.0"/>
<line x1="178.2" y1="1014.5" x2="181.5" y2="1014.5"/>
<line x1="186.1" y1="1070.5" x2="1224.5" y2="1070.5"/>
<line x1="186.5" y1="1070.5" x2="186.5" y2="1076.3"/>
<line x1="238.5" y1="1070.5" x2="238.5" y2="1076.3"/>
<line x1="290.5" y1="1070.5" x2="290.5" y2="1076.3"/>
<line x1="342.5" y1="1070.5" x2="342.5" y2="1076.3"/>
<line x1="394.5" y1="1070.5" x2="394.5" y2="1076.3"/>
<line x1="445.5" y1="1070.5" x2="445.5" y2="1076.3"/>
<line x1="497.5" y1="1070.5" x2="497.5" y2="1076.3"/>
<line x1="549.5" y1="1070.5" x2="549.5" y2="1076.3"/>
<line x1="601.5" y1="1070.5" x2="601.5" y2="1076.3"/>
<line x1="653.5" y1="1070.5" x2="653.5" y2="1076.3"/>
<line x1="705.5" y1="1070.5" x2="705.5" y2="1076.3"/>
<line x1="757.5" y1="1070.5" x2="757.5" y2="1076.3"/>
<line x1="809.5" y1="1070.5" x2="809.5" y2="1076.3"/>
<line x1="860.5" y1="1070.5" x2="860.5" y2="1076.3"/>
<line x1="912.5" y1="1070.5" x2="912.5" y2="1076.3"/>
<line x1="964.5" y1="1070.5" x2="964.5" y2="1076.3"/>
<line x1="1016.5" y1="1070.5" x2="1016.5" y2="1076.3"/>
<line x1="1068.5" y1="1070.5" x2="1068.5" y2="1076.3"/>
<line x1="1120.5" y1="1070.5" x2="1120.5" y2="1076.3"/>
<line x1="1172.5" y1="1070.5" x2="1172.5" y2="1076.3"/>
<line x1="1224.5" y1="1070.5" x2="1224.5" y2="1076.3"/>
<line x1="212.5" y1="1070.5" x2="212.5" y2="1073.8"/>
<line x1="264.5" y1="1070.5" x2="264.5" y2="1073.8"/>
<line x1="316.5" y1="1070.5" x2="316.5" y2="1073.8"/>
<line x1="368.5" y1="1070.5" x2="368.5" y2="1073.8"/>
<line x1="420.5" y1="1070.5" x2="420.5" y2="1073.8"/>
<line x1="471.5" y1="1070.5" x2="471.5" y2="1073.8"/>
<line x1="523.5" y1="1070.5" x2="523.5" y2="1073.8"/>
<line x1="575.5" y1="1070.5" x2="575.5" y2="1073.8"/>
<line x1="627.5" y1="1070.5" x2="627.5" y2="1073.8"/>
<line x1="679.5" y1="1070.5" x2="679.5" y2="1073.8"/>
<line x1="731.5" y1="1070.5" x2="731.5" y2="1073.8"/>
<line x1="783.5" y1="1070.5" x2="783.5" y2="1073.8"/>
<line x1="834.5" y1="1070.5" x2="834.5" y2="1073.8"/>
<line x1="886.5" y1="1070.5" x2="886.5" y2="1073.8"/>
<line x1="938.5" y1="1070.5" x2="938.5" y2="1073.8"/>
<line x1="990.5" y1="1070.5" x2="990.5" y2="1073.8"/>
<line x1="1042.5" y1="1070.5" x2="1042.5" y2="1073.8"/>
<line x1="1094.5" y1="1070.5" x2="1094.5" y2="1073.8"/>
<line x1="1146.5" y1="1070.5" x2="1146.5" y2="1073.8"/>
<line x1="1198.5" y1="1070.5" x2="1198.5" y2="1073.8"/>
</g>
<text x="172" y="787.5" font-size="10" fill="#474747" text-anchor="end" textLength="18.0" lengthAdjust="spacingAndGlyphs">150</text>
<text x="172" y="880.5" font-size="10" fill="#474747" text-anchor="end" textLength="18.0" lengthAdjust="spacingAndGlyphs">100</text>
<text x="172" y="973.5" font-size="10" fill="#474747" text-anchor="end" textLength="12.0" lengthAdjust="spacingAndGlyphs">50</text>
<text x="172" y="1065.5" font-size="10" fill="#474747" text-anchor="end" textLength="6.0" lengthAdjust="spacingAndGlyphs">0</text>
<text x="186.6" y="1090.7" font-size="10" fill="#474747" text-anchor="middle" textLength="12.8" lengthAdjust="spacingAndGlyphs">0.0</text>
<text x="238.5" y="1090.7" font-size="10" fill="#474747" text-anchor="middle" textLength="12.8" lengthAdjust="spacingAndGlyphs">0.5</text>
<text x="290.3" y="1090.7" font-size="10" fill="#474747" text-anchor="middle" textLength="12.8" lengthAdjust="spacingAndGlyphs">1.0</text>
<text x="342.2" y="1090.7" font-size="10" fill="#474747" text-anchor="middle" textLength="12.8" lengthAdjust="spacingAndGlyphs">1.5</text>
<text x="394.1" y="1090.7" font-size="10" fill="#474747" text-anchor="middle" textLength="12.8" lengthAdjust="spacingAndGlyphs">2.0</text>
<text x="446.0" y="1090.7" font-size="10" fill="#474747" text-anchor="middle" textLength="12.8" lengthAdjust="spacingAndGlyphs">2.5</text>
<text x="497.8" y="1090.7" font-size="10" fill="#474747" text-anchor="middle" textLength="12.8" lengthAdjust="spacingAndGlyphs">3.0</text>
<text x="549.7" y="1090.7" font-size="10" fill="#474747" text-anchor="middle" textLength="12.8" lengthAdjust="spacingAndGlyphs">3.5</text>
<text x="601.6" y="1090.7" font-size="10" fill="#474747" text-anchor="middle" textLength="12.8" lengthAdjust="spacingAndGlyphs">4.0</text>
<text x="653.4" y="1090.7" font-size="10" fill="#474747" text-anchor="middle" textLength="12.8" lengthAdjust="spacingAndGlyphs">4.5</text>
<text x="705.3" y="1090.7" font-size="10" fill="#474747" text-anchor="middle" textLength="12.8" lengthAdjust="spacingAndGlyphs">5.0</text>
<text x="757.2" y="1090.7" font-size="10" fill="#474747" text-anchor="middle" textLength="12.8" lengthAdjust="spacingAndGlyphs">5.5</text>
<text x="809.0" y="1090.7" font-size="10" fill="#474747" text-anchor="middle" textLength="12.8" lengthAdjust="spacingAndGlyphs">6.0</text>
<text x="860.9" y="1090.7" font-size="10" fill="#474747" text-anchor="middle" textLength="12.8" lengthAdjust="spacingAndGlyphs">6.5</text>
<text x="912.8" y="1090.7" font-size="10" fill="#474747" text-anchor="middle" textLength="12.8" lengthAdjust="spacingAndGlyphs">7.0</text>
<text x="964.7" y="1090.7" font-size="10" fill="#474747" text-anchor="middle" textLength="12.8" lengthAdjust="spacingAndGlyphs">7.5</text>
<text x="1016.5" y="1090.7" font-size="10" fill="#474747" text-anchor="middle" textLength="12.8" lengthAdjust="spacingAndGlyphs">8.0</text>
<text x="1068.4" y="1090.7" font-size="10" fill="#474747" text-anchor="middle" textLength="12.8" lengthAdjust="spacingAndGlyphs">8.5</text>
<text x="1120.3" y="1090.7" font-size="10" fill="#474747" text-anchor="middle" textLength="12.8" lengthAdjust="spacingAndGlyphs">9.0</text>
<text x="1172.1" y="1090.7" font-size="10" fill="#474747" text-anchor="middle" textLength="12.8" lengthAdjust="spacingAndGlyphs">9.5</text>
<text x="1224.0" y="1090.7" font-size="10" fill="#474747" text-anchor="middle" textLength="17" lengthAdjust="spacingAndGlyphs">10.0</text>
<text x="704.8" y="1109.8" font-size="12" fill="#474747" text-anchor="middle" textLength="42.4" lengthAdjust="spacingAndGlyphs">Time [s]</text>
<text x="0" y="0" font-size="12.5" fill="#474747" text-anchor="middle" transform="translate(136.5 889) rotate(-90)" textLength="140" lengthAdjust="spacingAndGlyphs">Volume (in Highflow) [ml]</text>
<text x="1334.7" y="1128.5" font-size="10.5" fill="#222" textLength="46.5" lengthAdjust="spacingAndGlyphs">Autoscale</text>
<rect x="1298" y="728.5" width="13" height="4" fill="#88bebc"/>
<text x="1317" y="734.5" font-size="10" fill="#555" textLength="47.7" lengthAdjust="spacingAndGlyphs">Volume (in</text>
<text x="1317" y="746.8" font-size="10" fill="#555" textLength="41" lengthAdjust="spacingAndGlyphs">Highflow)</text>
<rect x="1387.5" y="640.5" width="2" height="19" fill="#2a7fc0"/>
<rect x="1395.5" y="163.2" width="211.5" height="25.6" fill="#046db7"/>
<rect x="1608.5" y="163.2" width="97.5" height="25.6" fill="#046db7"/>
<rect x="1707" y="163.2" width="81" height="25.6" fill="#046db7"/>
<text x="1398.6" y="180.29999999999998" font-size="11.5" fill="#fff" font-weight="bold" textLength="93.7" lengthAdjust="spacingAndGlyphs">Measuring values</text>
<text x="1611.6" y="180.29999999999998" font-size="11.5" fill="#fff" font-weight="bold" textLength="21.5" lengthAdjust="spacingAndGlyphs">Unit</text>
<text x="1748" y="180.29999999999998" font-size="11.5" fill="#fff" text-anchor="middle" font-weight="bold" textLength="29.2" lengthAdjust="spacingAndGlyphs">Value</text>
<rect x="1395.5" y="194" width="211.5" height="208" fill="#e5f1fd"/>
<rect x="1608.5" y="194" width="98" height="208" fill="#e5f1fd"/>
<rect x="1707.5" y="194" width="80.5" height="208" fill="url(#vg0)"/>
<defs><linearGradient id="vg0" x1="0" x2="1" y1="0" y2="0"><stop offset="0" stop-color="#d3e0e8"/><stop offset="1" stop-color="#d5e1e9"/></linearGradient></defs>
<g stroke="#a3a3a3" stroke-width="1">
<line x1="1395.5" y1="194.5" x2="1607" y2="194.5"/><line x1="1608.5" y1="194.5" x2="1706.5" y2="194.5"/><line x1="1707.5" y1="194.5" x2="1788" y2="194.5"/>
<line x1="1395.5" y1="220.5" x2="1607" y2="220.5"/><line x1="1608.5" y1="220.5" x2="1706.5" y2="220.5"/><line x1="1707.5" y1="220.5" x2="1788" y2="220.5"/>
<line x1="1395.5" y1="246.5" x2="1607" y2="246.5"/><line x1="1608.5" y1="246.5" x2="1706.5" y2="246.5"/><line x1="1707.5" y1="246.5" x2="1788" y2="246.5"/>
<line x1="1395.5" y1="272.5" x2="1607" y2="272.5"/><line x1="1608.5" y1="272.5" x2="1706.5" y2="272.5"/><line x1="1707.5" y1="272.5" x2="1788" y2="272.5"/>
<line x1="1395.5" y1="298.5" x2="1607" y2="298.5"/><line x1="1608.5" y1="298.5" x2="1706.5" y2="298.5"/><line x1="1707.5" y1="298.5" x2="1788" y2="298.5"/>
<line x1="1395.5" y1="324.5" x2="1607" y2="324.5"/><line x1="1608.5" y1="324.5" x2="1706.5" y2="324.5"/><line x1="1707.5" y1="324.5" x2="1788" y2="324.5"/>
<line x1="1395.5" y1="350.5" x2="1607" y2="350.5"/><line x1="1608.5" y1="350.5" x2="1706.5" y2="350.5"/><line x1="1707.5" y1="350.5" x2="1788" y2="350.5"/>
<line x1="1395.5" y1="376.5" x2="1607" y2="376.5"/><line x1="1608.5" y1="376.5" x2="1706.5" y2="376.5"/><line x1="1707.5" y1="376.5" x2="1788" y2="376.5"/>
<line x1="1396" y1="194" x2="1396" y2="402"/><line x1="1608.8" y1="194" x2="1608.8" y2="402"/><line x1="1707.8" y1="194" x2="1707.8" y2="402"/>
</g>
<g stroke="#fbfdff" stroke-width="1"><line x1="1607.5" y1="194" x2="1607.5" y2="402"/><line x1="1607.5" y1="163.2" x2="1607.5" y2="188.79999999999998"/><line x1="1707" y1="163.2" x2="1707" y2="188.79999999999998"/></g>
<text x="1398.6" y="211.1" font-size="11.5" fill="#2b2b2b">Flow High</text>
<text x="1611.6" y="211.1" font-size="11.5" fill="#2b2b2b">l/min</text>
<text x="1786.6" y="211.1" font-size="11.5" fill="#2b2b2b" text-anchor="end">-0.6</text>
<text x="1398.6" y="237.1" font-size="11.5" fill="#2b2b2b">Flow High</text>
<text x="1611.6" y="237.1" font-size="11.5" fill="#2b2b2b">l/min</text>
<text x="1786.6" y="237.1" font-size="11.5" fill="#2b2b2b" text-anchor="end">-0.6</text>
<text x="1398.6" y="263.1" font-size="11.5" fill="#2b2b2b">Pressure (in Highflow)</text>
<text x="1611.6" y="263.1" font-size="11.5" fill="#2b2b2b">mbar</text>
<text x="1786.6" y="263.1" font-size="11.5" fill="#2b2b2b" text-anchor="end">0.95</text>
<text x="1398.6" y="289.1" font-size="11.5" fill="#2b2b2b">Pressure Difference</text>
<text x="1611.6" y="289.1" font-size="11.5" fill="#2b2b2b">mbar</text>
<text x="1786.6" y="289.1" font-size="11.5" fill="#2b2b2b" text-anchor="end">0.00</text>
<text x="1398.6" y="315.1" font-size="11.5" fill="#2b2b2b">Temperature</text>
<text x="1611.6" y="315.1" font-size="11.5" fill="#2b2b2b">°C</text>
<text x="1786.6" y="315.1" font-size="11.5" fill="#2b2b2b" text-anchor="end">26.5</text>
<text x="1398.6" y="341.1" font-size="11.5" fill="#2b2b2b">Humidity</text>
<text x="1611.6" y="341.1" font-size="11.5" fill="#2b2b2b">%</text>
<text x="1786.6" y="341.1" font-size="11.5" fill="#2b2b2b" text-anchor="end">29</text>
<text x="1398.6" y="367.1" font-size="11.5" fill="#2b2b2b">Oxygen</text>
<text x="1611.6" y="367.1" font-size="11.5" fill="#2b2b2b">%</text>
<text x="1786.6" y="367.1" font-size="11.5" fill="#2b2b2b" text-anchor="end">18.2</text>
<text x="1398.6" y="393.1" font-size="11.5" fill="#2b2b2b">Pressure High</text>
<text x="1611.6" y="393.1" font-size="11.5" fill="#2b2b2b">bar</text>
<text x="1786.6" y="393.1" font-size="11.5" fill="#2b2b2b" text-anchor="end">0.000</text>
<rect x="1395.5" y="641.7" width="211.5" height="25.6" fill="#88bfbd"/>
<rect x="1608.5" y="641.7" width="97.5" height="25.6" fill="#88bfbd"/>
<rect x="1707" y="641.7" width="81" height="25.6" fill="#88bfbd"/>
<text x="1398.6" y="658.8000000000001" font-size="11.5" fill="#fff" font-weight="bold" textLength="128" lengthAdjust="spacingAndGlyphs">Respiratory Parameters</text>
<text x="1611.6" y="658.8000000000001" font-size="11.5" fill="#fff" font-weight="bold" textLength="21.5" lengthAdjust="spacingAndGlyphs">Unit</text>
<text x="1748" y="658.8000000000001" font-size="11.5" fill="#fff" text-anchor="middle" font-weight="bold" textLength="29.2" lengthAdjust="spacingAndGlyphs">Value</text>
<rect x="1395.5" y="673" width="211.5" height="260" fill="#e6f4f5"/>
<rect x="1608.5" y="673" width="98" height="260" fill="#e6f4f5"/>
<rect x="1707.5" y="673" width="80.5" height="260" fill="url(#vg478)"/>
<defs><linearGradient id="vg478" x1="0" x2="1" y1="0" y2="0"><stop offset="0" stop-color="#d3e7e7"/><stop offset="1" stop-color="#d6e9e9"/></linearGradient></defs>
<g stroke="#a3a3a3" stroke-width="1">
<line x1="1395.5" y1="673.5" x2="1607" y2="673.5"/><line x1="1608.5" y1="673.5" x2="1706.5" y2="673.5"/><line x1="1707.5" y1="673.5" x2="1788" y2="673.5"/>
<line x1="1395.5" y1="699.5" x2="1607" y2="699.5"/><line x1="1608.5" y1="699.5" x2="1706.5" y2="699.5"/><line x1="1707.5" y1="699.5" x2="1788" y2="699.5"/>
<line x1="1395.5" y1="725.5" x2="1607" y2="725.5"/><line x1="1608.5" y1="725.5" x2="1706.5" y2="725.5"/><line x1="1707.5" y1="725.5" x2="1788" y2="725.5"/>
<line x1="1395.5" y1="751.5" x2="1607" y2="751.5"/><line x1="1608.5" y1="751.5" x2="1706.5" y2="751.5"/><line x1="1707.5" y1="751.5" x2="1788" y2="751.5"/>
<line x1="1395.5" y1="777.5" x2="1607" y2="777.5"/><line x1="1608.5" y1="777.5" x2="1706.5" y2="777.5"/><line x1="1707.5" y1="777.5" x2="1788" y2="777.5"/>
<line x1="1395.5" y1="803.5" x2="1607" y2="803.5"/><line x1="1608.5" y1="803.5" x2="1706.5" y2="803.5"/><line x1="1707.5" y1="803.5" x2="1788" y2="803.5"/>
<line x1="1395.5" y1="829.5" x2="1607" y2="829.5"/><line x1="1608.5" y1="829.5" x2="1706.5" y2="829.5"/><line x1="1707.5" y1="829.5" x2="1788" y2="829.5"/>
<line x1="1395.5" y1="855.5" x2="1607" y2="855.5"/><line x1="1608.5" y1="855.5" x2="1706.5" y2="855.5"/><line x1="1707.5" y1="855.5" x2="1788" y2="855.5"/>
<line x1="1395.5" y1="881.5" x2="1607" y2="881.5"/><line x1="1608.5" y1="881.5" x2="1706.5" y2="881.5"/><line x1="1707.5" y1="881.5" x2="1788" y2="881.5"/>
<line x1="1395.5" y1="907.5" x2="1607" y2="907.5"/><line x1="1608.5" y1="907.5" x2="1706.5" y2="907.5"/><line x1="1707.5" y1="907.5" x2="1788" y2="907.5"/>
<line x1="1396" y1="673" x2="1396" y2="933"/><line x1="1608.8" y1="673" x2="1608.8" y2="933"/><line x1="1707.8" y1="673" x2="1707.8" y2="933"/>
</g>
<g stroke="#fbfdff" stroke-width="1"><line x1="1607.5" y1="673" x2="1607.5" y2="933"/><line x1="1607.5" y1="641.7" x2="1607.5" y2="667.3000000000001"/><line x1="1707" y1="641.7" x2="1707" y2="667.3000000000001"/></g>
<text x="1398.6" y="690.1" font-size="11.5" fill="#2b2b2b">Rate</text>
<text x="1611.6" y="690.1" font-size="11.5" fill="#2b2b2b">b/min</text>
<text x="1786.6" y="690.1" font-size="11.5" fill="#2b2b2b" text-anchor="end">16.0</text>
<text x="1398.6" y="716.1" font-size="11.5" fill="#2b2b2b">Ti</text>
<text x="1611.6" y="716.1" font-size="11.5" fill="#2b2b2b">s</text>
<text x="1786.6" y="716.1" font-size="11.5" fill="#2b2b2b" text-anchor="end">1.49</text>
<text x="1398.6" y="742.1" font-size="11.5" fill="#2b2b2b">Te</text>
<text x="1611.6" y="742.1" font-size="11.5" fill="#2b2b2b">s</text>
<text x="1786.6" y="742.1" font-size="11.5" fill="#2b2b2b" text-anchor="end">2.26</text>
<text x="1398.6" y="768.1" font-size="11.5" fill="#2b2b2b">Ppeak</text>
<text x="1611.6" y="768.1" font-size="11.5" fill="#2b2b2b">mbar</text>
<text x="1786.6" y="768.1" font-size="11.5" fill="#2b2b2b" text-anchor="end">15.3</text>
<text x="1398.6" y="794.1" font-size="11.5" fill="#2b2b2b">PEEP</text>
<text x="1611.6" y="794.1" font-size="11.5" fill="#2b2b2b">mbar</text>
<text x="1786.6" y="794.1" font-size="11.5" fill="#2b2b2b" text-anchor="end">0.8</text>
<text x="1398.6" y="820.1" font-size="11.5" fill="#2b2b2b">Vti</text>
<text x="1611.6" y="820.1" font-size="11.5" fill="#2b2b2b">ml</text>
<text x="1786.6" y="820.1" font-size="11.5" fill="#2b2b2b" text-anchor="end">188</text>
<text x="1398.6" y="846.1" font-size="11.5" fill="#2b2b2b">Vte</text>
<text x="1611.6" y="846.1" font-size="11.5" fill="#2b2b2b">ml</text>
<text x="1786.6" y="846.1" font-size="11.5" fill="#2b2b2b" text-anchor="end">190</text>
<text x="1398.6" y="872.1" font-size="11.5" fill="#2b2b2b">Vi</text>
<text x="1611.6" y="872.1" font-size="11.5" fill="#2b2b2b">l/min</text>
<text x="1786.6" y="872.1" font-size="11.5" fill="#2b2b2b" text-anchor="end">3.0</text>
<text x="1398.6" y="898.1" font-size="11.5" fill="#2b2b2b">Ve</text>
<text x="1611.6" y="898.1" font-size="11.5" fill="#2b2b2b">l/min</text>
<text x="1786.6" y="898.1" font-size="11.5" fill="#2b2b2b" text-anchor="end">3.0</text>
<text x="1398.6" y="924.1" font-size="11.5" fill="#2b2b2b">Cstat</text>
<text x="1611.6" y="924.1" font-size="11.5" fill="#2b2b2b">ml/mbar</text>
<text x="1786.6" y="924.1" font-size="11.5" fill="#2b2b2b" text-anchor="end">13.3</text>
<rect x="0" y="1142.5" width="1800" height="16.5" fill="#f0f0f0"/>
<rect x="0.5" y="1141" width="354.5" height="2" fill="#c4c4c4"/>
<rect x="0.5" y="1141" width="1.2" height="18" fill="#c4c4c4"/>
<rect x="355" y="1141" width="1.5" height="18" fill="#fafafa"/>
<text x="2.7" y="1154.9" font-size="11.5" fill="#222" textLength="93.7" lengthAdjust="spacingAndGlyphs">Trending: Stopped</text>
<rect x="358.5" y="1141" width="353.5" height="2" fill="#c4c4c4"/>
<rect x="358.5" y="1141" width="1.2" height="18" fill="#c4c4c4"/>
<rect x="712" y="1141" width="1.5" height="18" fill="#fafafa"/>
<text x="360.7" y="1154.9" font-size="11.5" fill="#222" textLength="95" lengthAdjust="spacingAndGlyphs">Baseflow: Disabled</text>
<rect x="715" y="1141" width="354" height="2" fill="#c4c4c4"/>
<rect x="715" y="1141" width="1.2" height="18" fill="#c4c4c4"/>
<rect x="1069" y="1141" width="1.5" height="18" fill="#fafafa"/>
<text x="717.2" y="1154.9" font-size="11.5" fill="#222" textLength="120" lengthAdjust="spacingAndGlyphs">Standardisation: 0/1013</text>
<rect x="1072" y="1141" width="354" height="2" fill="#c4c4c4"/>
<rect x="1072" y="1141" width="1.2" height="18" fill="#c4c4c4"/>
<rect x="1426" y="1141" width="1.5" height="18" fill="#fafafa"/>
<text x="1074.2" y="1154.9" font-size="11.5" fill="#222" textLength="112.5" lengthAdjust="spacingAndGlyphs">Gas type: Custom Gas</text>
<rect x="1429" y="1141" width="352.5" height="2" fill="#c4c4c4"/>
<rect x="1429" y="1141" width="1.2" height="18" fill="#c4c4c4"/>
<rect x="1781.5" y="1141" width="1.5" height="18" fill="#fafafa"/>
<text x="1431.2" y="1154.9" font-size="11.5" fill="#222" textLength="186" lengthAdjust="spacingAndGlyphs">Connection: Ok [Display Delay: 0.3 s]</text>
</svg>
</body></html>
